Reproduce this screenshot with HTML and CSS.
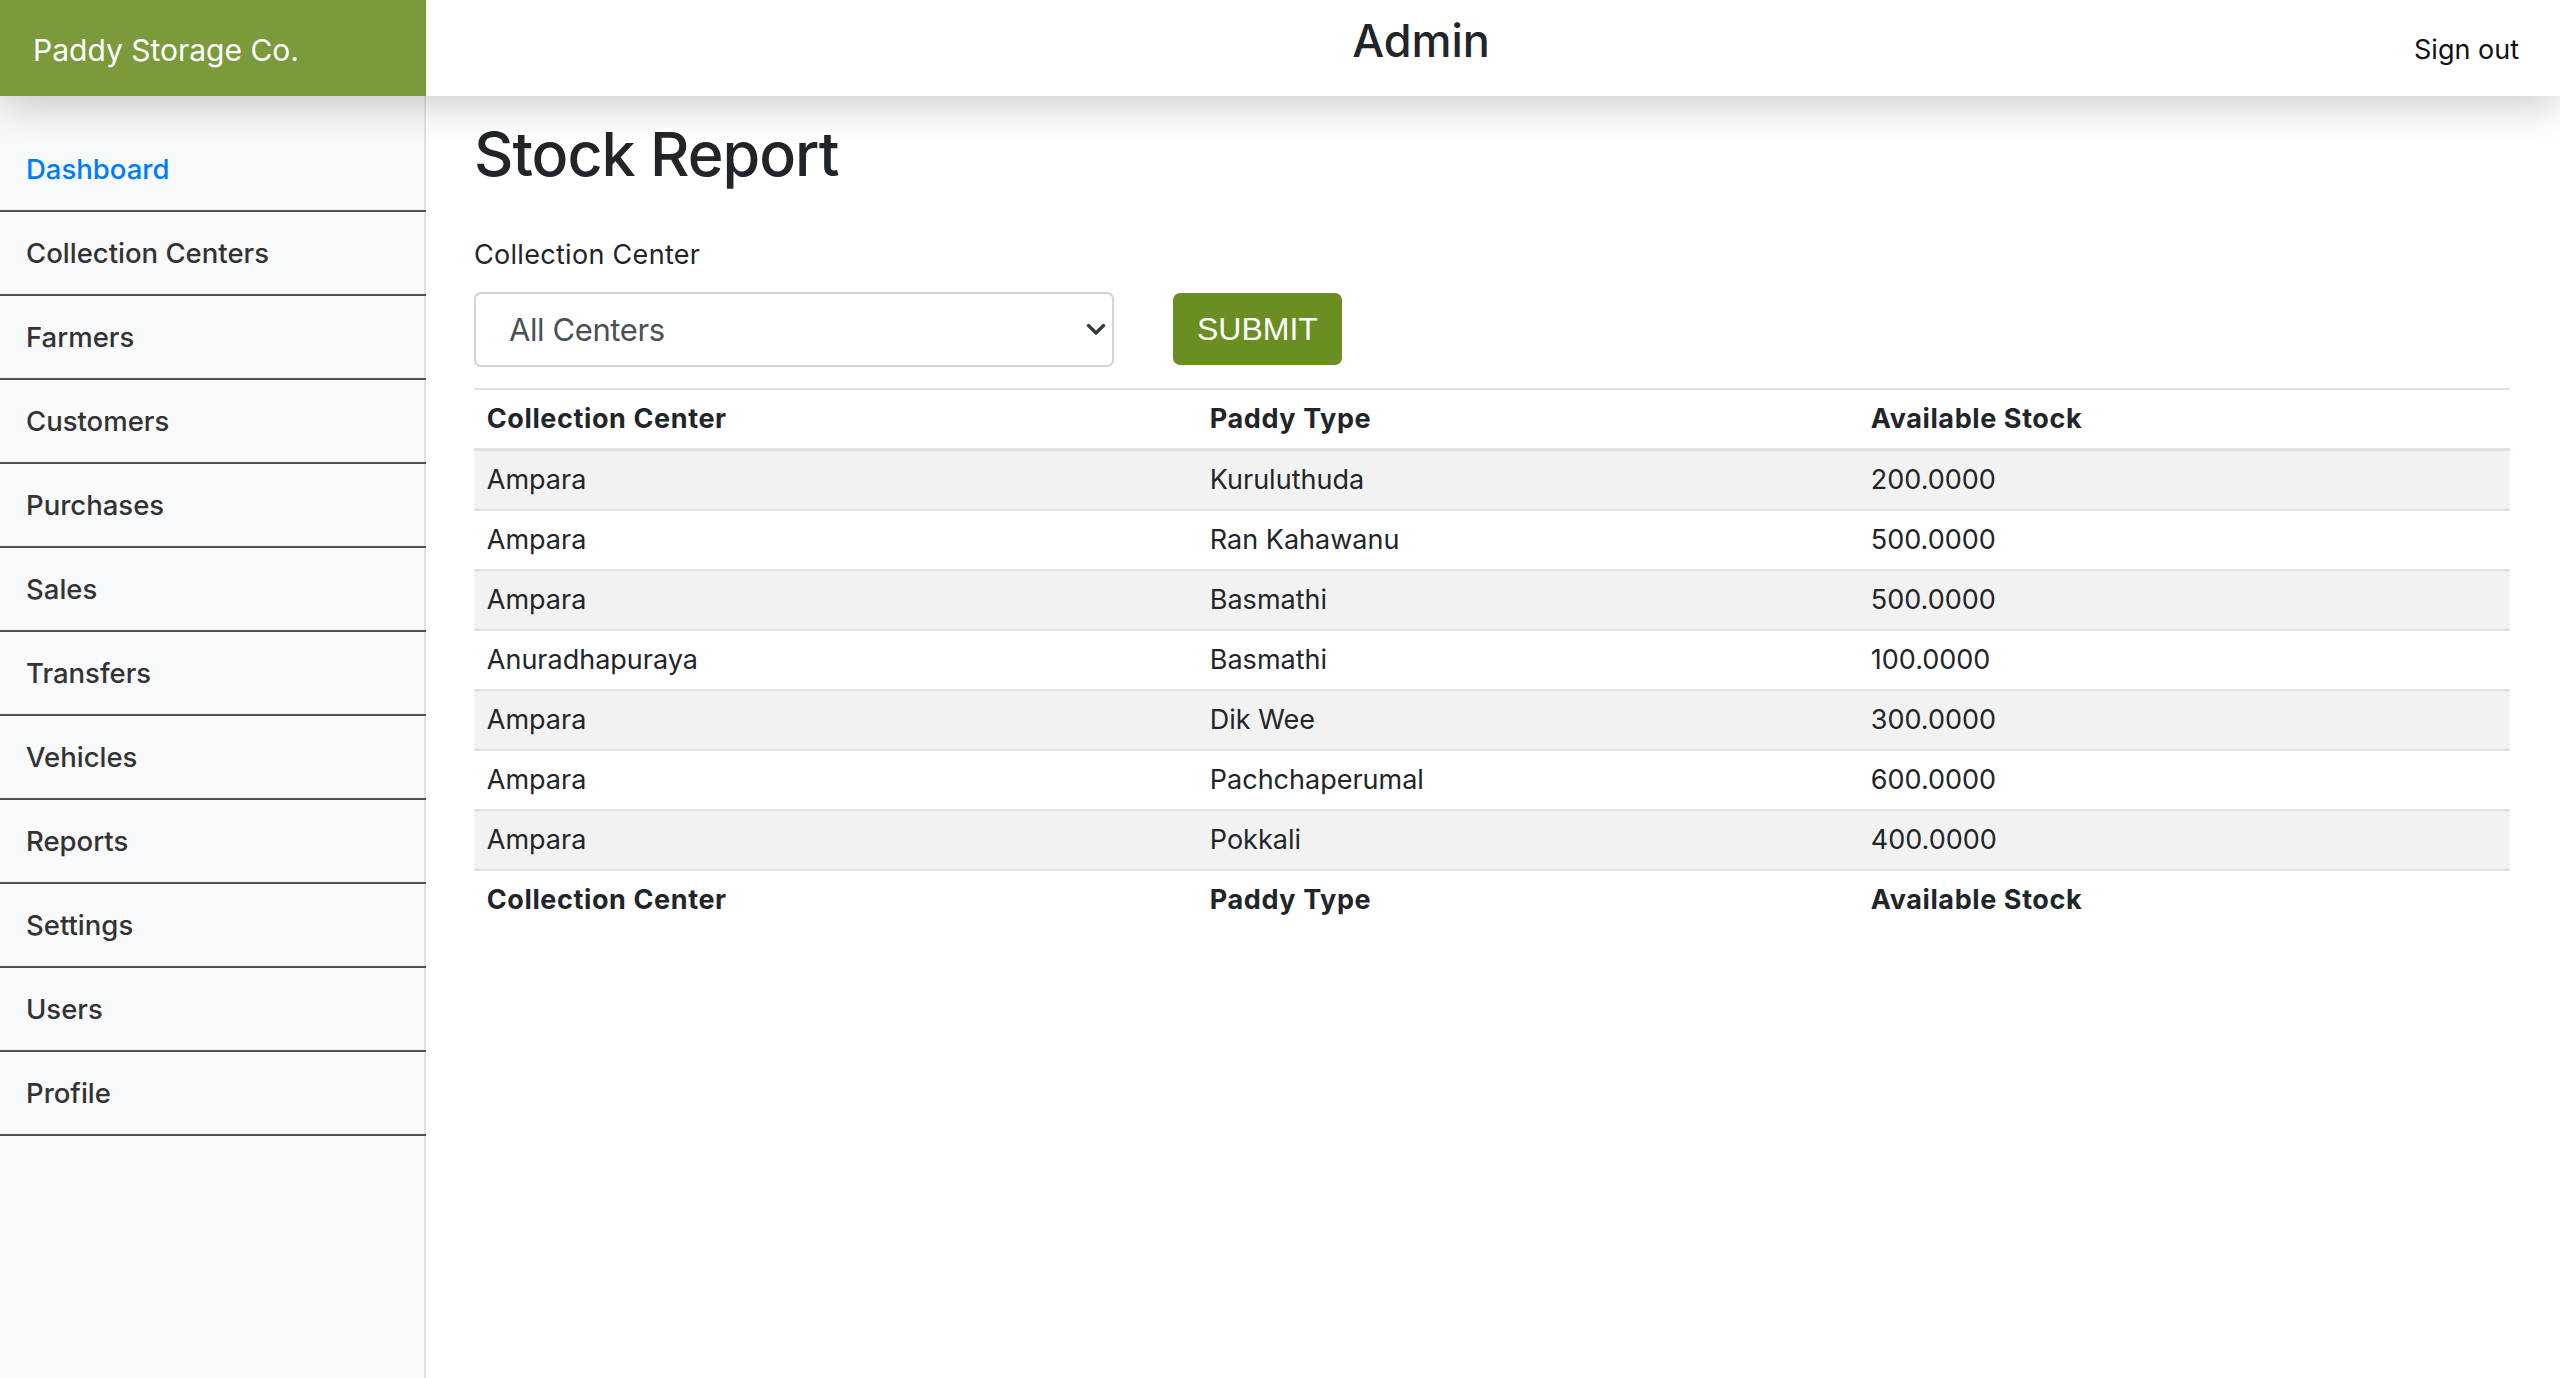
FILE: index.html
```html
<!DOCTYPE html>
<html lang="en">
<head>
<meta charset="utf-8">
<title>Stock Report</title>
<link rel="stylesheet" href="styles.css">
</head>
<body>
<header class="topbar">
  <a class="brand" href="#">Paddy Storage Co.</a>
  <div class="title">Admin</div>
  <a class="signout" href="#">Sign out</a>
</header>
<div class="layout">
  <nav class="sidebar">
    <a class="nav-link active" href="#">Dashboard</a>
    <a class="nav-link" href="#">Collection Centers</a>
    <a class="nav-link" href="#">Farmers</a>
    <a class="nav-link" href="#">Customers</a>
    <a class="nav-link" href="#">Purchases</a>
    <a class="nav-link" href="#">Sales</a>
    <a class="nav-link" href="#">Transfers</a>
    <a class="nav-link" href="#">Vehicles</a>
    <a class="nav-link" href="#">Reports</a>
    <a class="nav-link" href="#">Settings</a>
    <a class="nav-link" href="#">Users</a>
    <a class="nav-link" href="#">Profile</a>
  </nav>
  <main class="main">
    <h1 class="page-title">Stock Report</h1>
    <form class="filter">
      <label class="field-label" for="center">Collection Center</label>
      <div class="filter-row">
        <div class="select-wrap">
          <select id="center" class="select">
            <option>All Centers</option>
            <option>Ampara</option>
            <option>Anuradhapuraya</option>
          </select>
          <svg class="chevron" width="20" height="13" viewBox="0 0 20 13"><path d="M2.5 2.5 L10 10 L17.5 2.5" fill="none" stroke="#343a40" stroke-width="3.4" stroke-linecap="round" stroke-linejoin="round"/></svg>
        </div>
        <button type="button" class="btn-submit">SUBMIT</button>
      </div>
    </form>
    <table class="report">
      <colgroup>
        <col class="c1"><col class="c2"><col class="c3">
      </colgroup>
      <thead>
        <tr><th>Collection Center</th><th>Paddy Type</th><th>Available Stock</th></tr>
      </thead>
      <tbody>
        <tr><td>Ampara</td><td>Kuruluthuda</td><td>200.0000</td></tr>
        <tr><td>Ampara</td><td>Ran Kahawanu</td><td>500.0000</td></tr>
        <tr><td>Ampara</td><td>Basmathi</td><td>500.0000</td></tr>
        <tr><td>Anuradhapuraya</td><td>Basmathi</td><td>100.0000</td></tr>
        <tr><td>Ampara</td><td>Dik Wee</td><td>300.0000</td></tr>
        <tr><td>Ampara</td><td>Pachchaperumal</td><td>600.0000</td></tr>
        <tr><td>Ampara</td><td>Pokkali</td><td>400.0000</td></tr>
      </tbody>
      <tfoot>
        <tr><th>Collection Center</th><th>Paddy Type</th><th>Available Stock</th></tr>
      </tfoot>
    </table>
  </main>
</div>
</body>
</html>
```
FILE: styles.css
```css
* { box-sizing: border-box; }
html, body { margin: 0; padding: 0; }
body {
  font-family: Inter, "Noto Sans", "DejaVu Sans", sans-serif;
  color: #212529;
  background: #fff;
  font-size: 27px;
  line-height: 1.5;
}
a { text-decoration: none; }

.topbar {
  position: relative;
  z-index: 2;
  display: flex;
  align-items: stretch;
  height: 96px;
  background: #fff;
  box-shadow: 0 10px 40px rgba(0, 0, 0, 0.2);
}
.brand {
  width: 426px;
  flex: none;
  background: #7b9a3c;
  color: #fff;
  font-size: 30px;
  display: flex;
  align-items: center;
  padding: 5px 0 0 33px;
}
.title {
  flex: 1;
  text-align: center;
  font-size: 45px;
  font-weight: 500;
  line-height: 82px;
  padding: 0 0 0 26px;
  color: #212529;
}
.signout {
  flex: none;
  color: #111;
  font-size: 27px;
  display: flex;
  align-items: center;
  padding: 5px 41px 0 24px;
}

.layout {
  display: flex;
  min-height: calc(100vh - 96px);
}
.sidebar {
  width: 426px;
  flex: none;
  background: #f8f9fa;
  box-shadow: inset -2px 0 0 #e0e2e4;
  padding-top: 32px;
  display: flex;
  flex-direction: column;
}
.nav-link {
  display: flex;
  align-items: center;
  height: 84px;
  padding: 2px 26px 0;
  border-bottom: 2px solid #4f5154;
  color: #333;
  font-size: 27.5px;
  font-weight: 500;
}
.nav-link.active { color: #007bff; }

.main {
  flex: 1;
  padding: 22px 50px 0 48px;
}
.page-title {
  margin: 0 0 44px;
  font-size: 61px;
  font-weight: 500;
  line-height: 1.2;
  letter-spacing: -1px;
}
.field-label {
  display: block;
  margin-bottom: 16px;
  letter-spacing: 0.3px;
}
.filter-row {
  display: flex;
  align-items: center;
  gap: 59px;
  margin-bottom: 21px;
}
.select-wrap {
  position: relative;
  width: 640px;
}
.select {
  display: block;
  width: 100%;
  height: 75px;
  appearance: none;
  -webkit-appearance: none;
  background: #fff;
  border: 2px solid #ced4da;
  border-radius: 7px;
  padding: 0 50px 0 33px;
  font-family: inherit;
  font-size: 31px;
  letter-spacing: -0.4px;
  color: #495057;
}
.chevron {
  position: absolute;
  right: 8px;
  top: 31px;
  pointer-events: none;
}
.btn-submit {
  height: 72px;
  padding: 0 24px;
  border: 0;
  border-radius: 7px;
  background: #6b8e23;
  color: #fff;
  font-family: "Liberation Sans", Arial, sans-serif;
  font-size: 32px;
}

.report {
  width: 100%;
  border-collapse: collapse;
}
.report .c1 { width: 723px; }
.report .c2 { width: 661px; }
.report th,
.report td {
  text-align: left;
  padding: 10px 12.8px;
  border-top: 2px solid #dee2e6;
  line-height: 38px;
}
.report th { font-weight: 700; letter-spacing: 0.6px; }
.report thead th { border-bottom: 3px solid #dee2e6; }
.report tbody tr:nth-child(odd) { background: #f2f2f2; }
```
